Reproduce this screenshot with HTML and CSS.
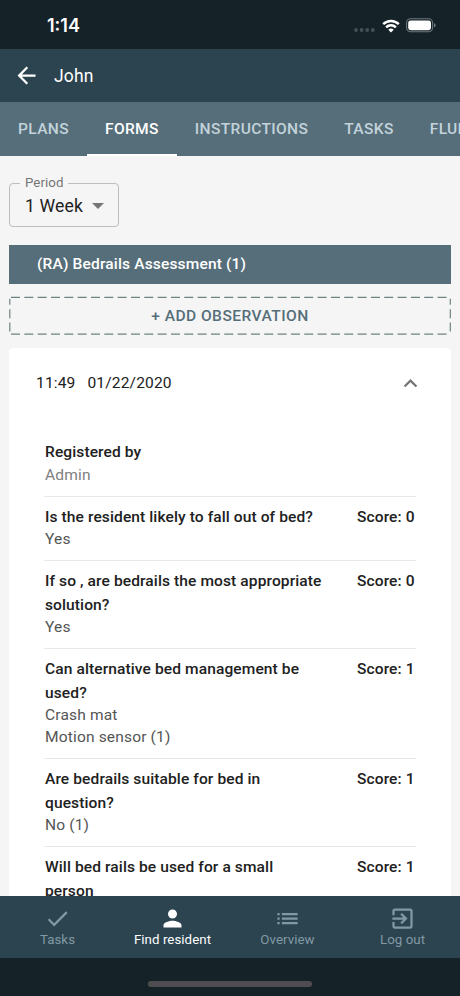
FILE: index.html
```html
<!DOCTYPE html>
<html lang="en">
<head>
<meta charset="UTF-8">
<meta name="viewport" content="width=device-width, initial-scale=1.0">
<title>Forms - John</title>
<link rel="stylesheet" href="styles.css">
</head>
<body>

<div class="status-bar">
    <span class="clock">1:14</span>
    <div class="status-icons">
        <svg class="signal" width="22" height="4" viewBox="0 0 22 4">
            <circle cx="2" cy="2" r="1.9"/><circle cx="7.6" cy="2" r="1.9"/><circle cx="13.2" cy="2" r="1.9"/><circle cx="18.8" cy="2" r="1.9"/>
        </svg>
        <svg class="wifi" width="18" height="14" viewBox="0 0 18 14">
            <path d="M1.2 5.2A11.2 11.2 0 0 1 16.8 5.2M4.1 8.3A7 7 0 0 1 13.9 8.3" fill="none" stroke="#fff" stroke-width="2.5"/>
            <path d="M9 13.5L6.3 10.7A3.9 3.9 0 0 1 11.7 10.7Z" fill="#fff"/>
        </svg>
        <svg class="battery" width="30" height="15" viewBox="0 0 30 15">
            <rect x=".6" y=".8" width="26" height="13" rx="4" fill="none" stroke="#6d767a" stroke-width="1.1"/>
            <rect x="2.2" y="2.4" width="22.8" height="9.8" rx="2.4" fill="#fff"/>
            <path d="M28 5.2c2.2.6 2.2 3.6 0 4.2z" fill="#6d767a"/>
        </svg>
    </div>
</div>

<header class="app-bar">
    <svg class="back" width="27" height="27" viewBox="0 0 24 24"><path d="M20 11H7.83l5.59-5.59L12 4l-8 8 8 8 1.41-1.41L7.83 13H20v-2z"/></svg>
    <span class="resident">John</span>
</header>

<nav class="tabs">
    <a class="tab">PLANS</a>
    <a class="tab active">FORMS</a>
    <a class="tab">INSTRUCTIONS</a>
    <a class="tab">TASKS</a>
    <a class="tab">FLUIDS</a>
</nav>

<main class="content">
    <fieldset class="period">
        <legend>Period</legend>
        <div class="period-value">
            <span>1 Week</span>
            <svg width="12" height="6" viewBox="0 0 12 6"><path d="M0 0h12L6 6z"/></svg>
        </div>
    </fieldset>

    <h2 class="form-title">(RA) Bedrails Assessment (1)</h2>

    <button type="button" class="add">
        <svg class="dashes" width="442" height="39" viewBox="0 0 442 39">
            <path d="M2 1.3H440M2 38.2H440"/>
            <path class="side" d="M.8 2.7V36M441.3 2.7V36"/>
        </svg>
        <span>+ ADD OBSERVATION</span>
    </button>

    <section class="card">
        <div class="card-head">
            <span>11:49</span>
            <span>01/22/2020</span>
            <svg width="27" height="27" viewBox="0 0 24 24"><path d="M12 8l-6 6 1.41 1.41L12 10.83l4.59 4.58L18 14z"/></svg>
        </div>
        <div class="row">
            <div class="answer">
                <h3>Registered by</h3>
                <p class="author">Admin</p>
            </div>
        </div>
        <div class="row">
            <div class="answer">
                <h3>Is the resident likely to fall out of bed?</h3>
                <p>Yes</p>
            </div>
            <span class="score">Score: 0</span>
        </div>
        <div class="row">
            <div class="answer">
                <h3>If so , are bedrails the most appropriate solution?</h3>
                <p>Yes</p>
            </div>
            <span class="score">Score: 0</span>
        </div>
        <div class="row">
            <div class="answer">
                <h3>Can alternative bed management be used?</h3>
                <p>Crash mat</p>
                <p>Motion sensor (1)</p>
            </div>
            <span class="score">Score: 1</span>
        </div>
        <div class="row">
            <div class="answer">
                <h3>Are bedrails suitable for bed in question?</h3>
                <p>No (1)</p>
            </div>
            <span class="score">Score: 1</span>
        </div>
        <div class="row">
            <div class="answer">
                <h3>Will bed rails be used for a small<br>person</h3>
            </div>
            <span class="score">Score: 1</span>
        </div>
    </section>
</main>

<nav class="bottom-nav">
    <a class="nav-item">
        <svg width="27" height="27" viewBox="0 0 24 24"><path d="M9 16.17L4.83 12l-1.42 1.41L9 19 21 7l-1.41-1.41z"/></svg>
        <span>Tasks</span>
    </a>
    <a class="nav-item selected">
        <svg width="27" height="27" viewBox="0 0 24 24"><path d="M12 12c2.21 0 4-1.79 4-4s-1.79-4-4-4-4 1.79-4 4 1.79 4 4 4zm0 2c-2.67 0-8 1.34-8 4v2h16v-2c0-2.66-5.33-4-8-4z"/></svg>
        <span>Find resident</span>
    </a>
    <a class="nav-item">
        <svg width="27" height="27" viewBox="0 0 24 24"><path d="M3 13h2v-2H3v2zm0 4h2v-2H3v2zm0-8h2V7H3v2zm4 4h14v-2H7v2zm0 4h14v-2H7v2zM7 7v2h14V7H7z"/></svg>
        <span>Overview</span>
    </a>
    <a class="nav-item">
        <svg width="27" height="27" viewBox="0 0 24 24"><path d="M10.09 15.59L11.5 17l5-5-5-5-1.41 1.41L12.67 11H3v2h9.67l-2.58 2.59zM19 3H5c-1.11 0-2 .9-2 2v4h2V5h14v14H5v-4H3v4c0 1.1.89 2 2 2h14c1.1 0 2-.9 2-2V5c0-1.1-.9-2-2-2z"/></svg>
        <span>Log out</span>
    </a>
</nav>

<div class="home-area"><div class="home-bar"></div></div>

</body>
</html>
```

FILE: styles.css
```css
* {
    box-sizing: border-box;
}

body {
    margin: 0;
    height: 996px;
    display: flex;
    flex-direction: column;
    overflow: hidden;
    background: #f5f5f5;
    font-family: Roboto, sans-serif;
    font-size: 15.55px;
    color: #212121;
}

h2, h3, p {
    margin: 0;
}

svg {
    display: block;
    fill: currentColor;
    flex: none;
}

.status-bar {
    flex: none;
    height: 49px;
    padding: 2px 24px 0 47px;
    display: flex;
    justify-content: space-between;
    align-items: center;
    background: #152329;
    color: #fff;
}

.clock {
    font-family: Inter, sans-serif;
    font-size: 18px;
    font-weight: 600;
}

.status-icons {
    display: flex;
    align-items: center;
}

.signal {
    margin: 8px 6px 0 0;
    color: #465157;
}

.wifi {
    margin-right: 6px;
}

.app-bar {
    flex: none;
    height: 53px;
    padding-left: 13px;
    display: flex;
    align-items: center;
    gap: 14px;
    background: #2c444f;
    color: #fff;
}

.resident {
    font-size: 17.5px;
    letter-spacing: 0.15px;
}

.tabs {
    flex: none;
    height: 54px;
    display: flex;
    overflow: hidden;
    background: #566e79;
}

.tab {
    flex: none;
    padding: 0 18px;
    line-height: 54px;
    font-weight: 500;
    letter-spacing: 0.35px;
    color: #c3d3db;
}

.tab.active {
    color: #fff;
    border-bottom: 2px solid #fff;
}

.content {
    flex: 1;
    min-height: 0;
    overflow: hidden;
    padding: 19px 9px 0;
}

.period {
    width: 110px;
    height: 52px;
    margin: 0;
    padding: 0 14px 0 10px;
    border: 1px solid #bdbdbd;
    border-radius: 4px;
}

.period legend {
    padding: 0 5px;
    font-size: 13.3px;
    line-height: 16px;
    letter-spacing: 0.05px;
    color: #757575;
}

.period-value {
    display: flex;
    align-items: center;
    justify-content: space-between;
    padding: 5px 0 0 5px;
    font-size: 17.6px;
    line-height: 20px;
    letter-spacing: 0.15px;
}

.period-value svg {
    color: #757575;
}

.form-title {
    height: 39px;
    margin-top: 18px;
    padding-left: 28px;
    line-height: 39px;
    font-size: 15.55px;
    font-weight: 500;
    letter-spacing: 0.15px;
    background: #566e79;
    color: #fff;
}

.add {
    position: relative;
    display: block;
    width: 442px;
    height: 39px;
    margin-top: 12px;
    padding: 0;
    border: 0;
    background: none;
    font: 500 15.55px Roboto, sans-serif;
    letter-spacing: 0.45px;
    color: #566e79;
}

.dashes {
    position: absolute;
    inset: 0;
}

.dashes path {
    fill: none;
    stroke: #6d8482;
    stroke-width: 1.2;
    stroke-dasharray: 9 4.33;
}

.dashes .side {
    stroke-dasharray: 6 4.5 9 4.33 9 4;
}

.card {
    margin-top: 13px;
    height: 700px;
    padding: 0 35px;
    border-radius: 4px;
    background: #fff;
}

.card-head {
    display: flex;
    align-items: center;
    height: 70px;
    gap: 12px;
    margin: 0 -8px 14px -8px;
    letter-spacing: 0.15px;
}

.card-head svg {
    margin-left: auto;
    color: #757575;
}

.row {
    display: flex;
    justify-content: space-between;
    padding: 9.4px 0 9.6px 1px;
    border-bottom: 1px solid #e8e8e8;
}

.row h3,
.score {
    font-size: 15.55px;
    font-weight: 500;
    line-height: 23.4px;
    letter-spacing: 0.1px;
}

.row h3 {
    margin-bottom: -1.1px;
}

.row p {
    line-height: 22.2px;
    letter-spacing: 0.15px;
    color: #555;
}

.row .author {
    color: #808080;
}

.answer {
    width: 285px;
}

.score {
    width: 59px;
    white-space: nowrap;
}

.bottom-nav {
    flex: none;
    height: 62px;
    display: flex;
    background: #2c444f;
}

.bottom-nav .nav-item {
    flex: 1;
    display: flex;
    flex-direction: column;
    align-items: center;
    padding-top: 9px;
    font-size: 13.3px;
    line-height: 16px;
    letter-spacing: 0.05px;
    color: #8199a5;
}

.bottom-nav .selected {
    color: #fff;
}

.home-area {
    flex: none;
    height: 38px;
    padding-top: 23px;
    background: #152329;
}

.home-bar {
    width: 164px;
    height: 6px;
    margin: 0 auto;
    border-radius: 3px;
    background: #4f4d50;
}
```
